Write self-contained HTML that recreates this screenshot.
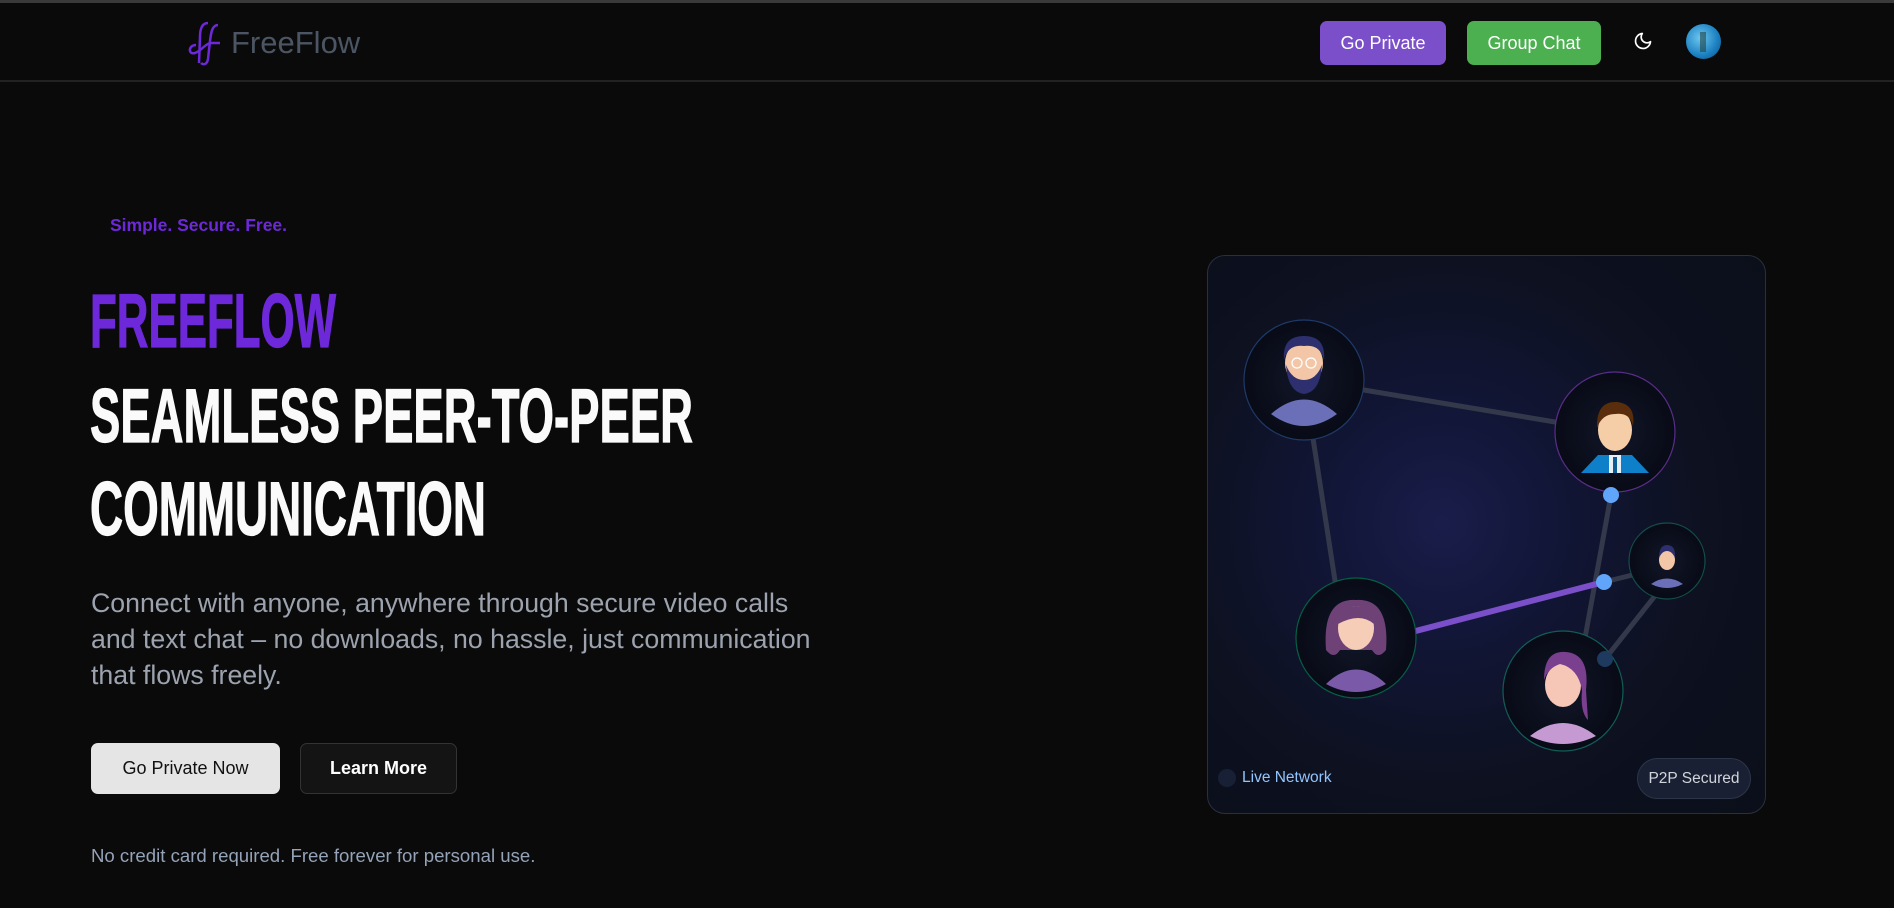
<!DOCTYPE html>
<html><head><meta charset="utf-8"><style>
*{margin:0;padding:0;box-sizing:border-box}
body{width:1894px;height:908px;background:#0a0a0a;font-family:"Liberation Sans",sans-serif;position:relative;overflow:hidden}
.topbar{position:absolute;left:0;top:0;width:1894px;height:3px;background:#3a3a3a}
.nav{position:absolute;left:0;top:3px;width:1894px;height:79px;border-bottom:2px solid #222}
.abs{position:absolute}
.btn{position:absolute;display:flex;align-items:center;justify-content:center;border-radius:7px;font-size:18px;color:#fff}
</style></head><body>
<div class="topbar"></div>
<div class="nav"></div>
<svg class="abs" style="left:186px;top:19px" width="42" height="48" viewBox="0 0 42 48">
<path d="M22 4 C16 4 14 10 14 18 L13 44" stroke="#6d28d9" stroke-width="2.5" fill="none"/>
<path d="M10 26 C2 26 2 36 9 34 C15 32 18 26 24 24 L34 24" stroke="#6d28d9" stroke-width="2.5" fill="none"/>
<path d="M32 6 C26 6 25 14 24 22 L22 40 C21 46 17 46 15 44" stroke="#6d28d9" stroke-width="2.5" fill="none"/>
</svg>
<div class="abs" style="left:231px;top:25px;font-size:31px;color:#4b5563">FreeFlow</div>
<div class="btn" style="left:1320px;top:21px;width:126px;height:44px;background:#7b4fc9">Go Private</div>
<div class="btn" style="left:1467px;top:21px;width:134px;height:44px;background:#4caf50">Group Chat</div>
<svg class="abs" style="left:1633px;top:31px" width="20" height="20" viewBox="0 0 24 24"><path d="M21 12.8A9 9 0 1 1 11.2 3a7 7 0 0 0 9.8 9.8z" stroke="#fff" stroke-width="2" fill="none" stroke-linejoin="round"/></svg>
<div class="abs" style="left:1686px;top:24px;width:35px;height:35px;border-radius:50%;background:radial-gradient(circle at 40% 40%,#6ec6f0,#1a7fc0 60%,#0d4f86);overflow:hidden"><div style="position:absolute;left:14px;top:8px;width:6px;height:20px;background:#244;opacity:.6"></div></div>

<div class="abs" style="left:110px;top:215px;font-size:17.5px;font-weight:bold;color:#6d28d9">Simple. Secure. Free.</div>
<svg class="abs" style="left:0;top:0" width="800" height="560">
<g font-family="Liberation Sans Narrow, Liberation Sans, sans-serif" font-weight="bold" font-size="76" stroke-width="1.2">
<text x="90" y="347" fill="#6d28d9" stroke="#6d28d9" textLength="246" lengthAdjust="spacingAndGlyphs">FREEFLOW</text>
<text x="90" y="442" fill="#fafafa" stroke="#fafafa" textLength="603" lengthAdjust="spacingAndGlyphs">SEAMLESS PEER-TO-PEER</text>
<text x="90" y="535" fill="#fafafa" stroke="#fafafa" textLength="396" lengthAdjust="spacingAndGlyphs">COMMUNICATION</text>
</g></svg>
<div class="abs" style="left:91px;top:585px;width:722px;font-size:26.7px;line-height:36px;color:#9ca3af">Connect with anyone, anywhere through secure video calls and text chat – no downloads, no hassle, just communication that flows freely.</div>
<div class="btn" style="left:91px;top:743px;width:189px;height:51px;background:#e5e5e5;color:#111;border-radius:7px">Go Private Now</div>
<div class="btn" style="left:300px;top:743px;width:157px;height:51px;background:#141414;border:1px solid #333;font-weight:bold">Learn More</div>
<div class="abs" style="left:91px;top:845px;font-size:18.6px;color:#94a3b8">No credit card required. Free forever for personal use.</div>

<div class="abs" style="left:1207px;top:255px;width:559px;height:559px;border-radius:18px;border:1px solid #2a2f3d;background:radial-gradient(circle at 42% 48%,#1a1d4a 0%,#121638 25%,#0d1120 60%,#0b0f1a 100%);overflow:hidden">
<svg width="559" height="559" viewBox="1207 255 559 559" style="position:absolute;left:-1px;top:-1px">
<g stroke="#33384a" stroke-width="5" stroke-linecap="round">
<line x1="1304" y1="380" x2="1615" y2="432"/>
<line x1="1304" y1="380" x2="1338" y2="600"/>
<line x1="1611" y1="495" x2="1581" y2="660"/>
<line x1="1604" y1="582" x2="1681" y2="563"/>
<line x1="1605" y1="659" x2="1681" y2="563"/>
</g>
<line x1="1385" y1="639" x2="1604" y2="582" stroke="#7b4fc9" stroke-width="6"/>
<defs>
<radialGradient id="nb"><stop offset="0" stop-color="#111628"/><stop offset="1" stop-color="#080b16"/></radialGradient>
</defs>
<g fill="url(#nb)" stroke-width="1.2">
<circle cx="1304" cy="380" r="60" stroke="#1e3a6a"/>
<circle cx="1615" cy="432" r="60" stroke="#5b2d8a"/>
<circle cx="1667" cy="561" r="38" stroke="#134e4a"/>
<circle cx="1356" cy="638" r="60" stroke="#065f46"/>
<circle cx="1563" cy="691" r="60" stroke="#115e59"/>
</g>
<g>
<path d="M1271 414 Q1304 385 1337 414 Q1304 438 1271 414z" fill="#6b6fb8"/>
<ellipse cx="1304" cy="363" rx="19" ry="22" fill="#f2c6a6"/>
<path d="M1286 365 Q1288 392 1304 394 Q1320 392 1322 365 Q1316 380 1304 380 Q1292 380 1286 365z" fill="#2e2f6e"/>
<path d="M1284 360 Q1282 336 1304 336 Q1326 336 1324 360 Q1320 344 1304 346 Q1288 344 1284 360z" fill="#2e2f6e"/>
<circle cx="1297" cy="363" r="5" fill="none" stroke="#fff" stroke-width="1.3"/><circle cx="1311" cy="363" r="5" fill="none" stroke="#fff" stroke-width="1.3"/>
</g>
<g>
<path d="M1581 473 L1598 455 L1632 455 L1649 473z" fill="#0e7fc9"/>
<rect x="1609" y="455" width="12" height="18" fill="#e8eef5"/><rect x="1613" y="457" width="4" height="16" fill="#0b5c93"/>
<ellipse cx="1615" cy="430" rx="17" ry="21" fill="#f5cda7"/>
<path d="M1597 428 Q1596 401 1617 402 Q1636 404 1633 426 Q1630 412 1615 414 Q1602 414 1597 428z" fill="#5a2e0c"/>
</g>
<g>
<path d="M1651 584 Q1667 573 1683 584 Q1667 592 1651 584z" fill="#6b6fb8"/>
<ellipse cx="1667" cy="560" rx="8" ry="10" fill="#f2c6a6"/>
<path d="M1659 558 Q1659 545 1667 545 Q1676 545 1675 558 Q1672 551 1667 551 Q1662 551 1659 558z" fill="#2e2f6e"/>
</g>
<g>
<path d="M1326 684 Q1356 655 1386 684 Q1356 700 1326 684z" fill="#7a5aa8"/>
<path d="M1326 650 Q1322 598 1356 600 Q1390 598 1386 650 Q1378 660 1372 650 L1340 650 Q1334 660 1326 650z" fill="#6e4277"/>
<ellipse cx="1356" cy="628" rx="18" ry="22" fill="#f6cdb6"/>
<path d="M1338 624 Q1340 606 1356 606 Q1372 606 1374 624 Q1360 612 1338 624z" fill="#6e4277"/>
</g>
<g>
<path d="M1530 736 Q1563 710 1596 736 Q1563 752 1530 736z" fill="#c59ad2"/>
<ellipse cx="1563" cy="685" rx="18" ry="22" fill="#f6c6b6"/>
<path d="M1544 680 Q1544 650 1566 652 Q1590 654 1586 690 L1588 720 Q1580 712 1582 690 Q1578 668 1560 664 Q1548 668 1544 680z" fill="#7b3f8f"/>
</g>
<circle cx="1611" cy="495" r="8" fill="#60a5fa"/>
<circle cx="1604" cy="582" r="8" fill="#60a5fa"/>
<circle cx="1605" cy="659" r="8" fill="#1e3a5f"/>
<circle cx="1227" cy="778" r="9" fill="#182036"/>
</svg>
<div class="abs" style="left:34px;top:513px;font-size:15.5px;color:#93c5fd">Live Network</div>
<div class="abs" style="left:429px;top:502px;width:114px;height:41px;border-radius:21px;background:#1a2033;border:1px solid #2d3548;color:#d1d5db;font-size:15.5px;display:flex;align-items:center;justify-content:center">P2P Secured</div>
</div>
</body></html>
